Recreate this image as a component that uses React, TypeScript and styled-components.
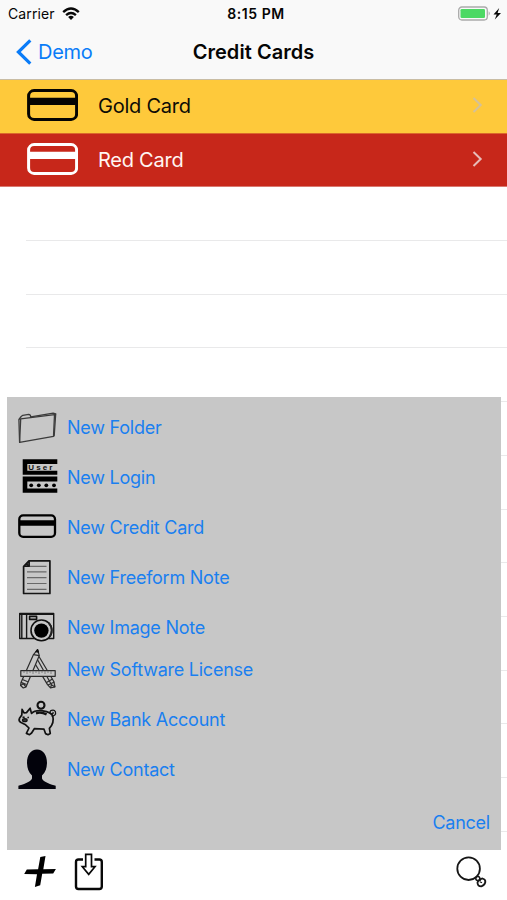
import React from "react";
import styled, { createGlobalStyle } from "styled-components";

const GlobalStyle = createGlobalStyle`
  * { box-sizing: border-box; }
  body { margin: 0; background: #fff; }
  button { border: 0; padding: 0; background: none; font: inherit; color: inherit; }
`;

const Screen = styled.div`
  position: relative;
  width: 507px;
  height: 900px;
  overflow: hidden;
  display: flex;
  flex-direction: column;
  background: #fff;
  color: #050505;
  font-family: Inter, "Liberation Sans", sans-serif;
  svg { display: block; flex: none; }
`;

const StatusBar = styled.header`
  height: 27px;
  flex: none;
  display: grid;
  grid-template-columns: 1fr auto 1fr;
  align-items: center;
  padding: 0 5px 0 8px;
  background: #f9f9f9;
  font-size: 14px;
`;

const Carrier = styled.div`
  display: flex;
  align-items: center;
  gap: 7px;
  letter-spacing: 0.1px;
`;

const Clock = styled.div`
  font-weight: 600;
  font-size: 14px;
  letter-spacing: 0.55px;
  padding-left: 2px;
`;

const Power = styled.div`
  justify-self: end;
`;

const NavBar = styled.nav`
  height: 53px;
  flex: none;
  display: grid;
  grid-template-columns: 1fr auto 1fr;
  align-items: center;
  padding: 0 16px 2px;
  background: #f9f9f9;
  border-bottom: 1px solid #c9bda4;
`;

const Back = styled.button`
  display: flex;
  align-items: center;
  gap: 6px;
  color: #0a7cf8;
  font-size: 20px;
  letter-spacing: -0.3px;
`;

const Title = styled.h1`
  margin: 0;
  font-size: 20px;
  font-weight: 600;
  letter-spacing: 0.05px;
`;

const List = styled.main`
  flex: 1;
  min-height: 0;
  overflow: hidden;
`;

const CardRow = styled.div<{ $bg: string; $fg: string; $line: string }>`
  height: 53.7px;
  display: flex;
  align-items: center;
  padding: 0 24px 2px 27px;
  background: ${(p) => p.$bg};
  color: ${(p) => p.$fg};
  border-bottom: 1px solid ${(p) => p.$line};
`;

const CardName = styled.span`
  flex: 1;
  margin-left: 20px;
  padding-top: 2px;
  font-size: 20px;
  letter-spacing: -0.25px;
`;

const EmptyRow = styled.div`
  height: 53.7px;
  margin-left: 26px;
  border-bottom: 1px solid #e9e9ea;
`;

const Sheet = styled.section`
  position: absolute;
  left: 7px;
  top: 397px;
  width: 494px;
  height: 453px;
  padding: 10px 11px 0 10px;
  display: flex;
  flex-direction: column;
  gap: 10px;
  background: #c7c7c7;
  color: #1a7ff0;
  font-size: 18px;
  letter-spacing: -0.24px;
`;

const Action = styled.button<{ $tight?: boolean }>`
  height: 40px;
  flex: none;
  margin-top: ${(p) => (p.$tight ? "-8px" : "0")};
  display: flex;
  align-items: center;
  gap: 8px;
  text-align: left;
  letter-spacing: inherit;
`;

const Cancel = styled.button`
  align-self: flex-end;
  height: 40px;
  margin-top: 3px;
  letter-spacing: -0.24px;
`;

const Toolbar = styled.footer`
  height: 50px;
  flex: none;
  display: flex;
  align-items: center;
  gap: 18px;
  padding: 0 20px 6px 24px;
  background: #fff;
`;

const Spacer = styled.div`
  flex: 1;
`;

const Wifi = () => (
  <svg width="18" height="14" viewBox="0 0 18 14" fill="none" stroke="#080808" strokeWidth="2.4">
    <path d="M1.2 5.1Q9-2 16.8 5.1M4.1 8.1Q9 3.8 13.9 8.1" />
    <path d="M6.1 9.9Q9 7.8 11.9 9.9L9 13Z" fill="#080808" stroke="none" />
  </svg>
);

const Battery = () => (
  <svg width="44" height="16" viewBox="0 0 44 16">
    <rect x=".7" y="1" width="28.6" height="13" rx="3.2" fill="#f9f9f9" stroke="#aaa" strokeWidth="1.3" />
    <rect x="2.5" y="3" width="24.5" height="9" rx="1.3" fill="#4cd964" />
    <path d="M30.7 5.3q2.2 2.2 0 4.4z" fill="#aaa" />
    <path d="M41.2 2 35.5 8.4h3.2L36.8 13.5 43 7h-3.4z" fill="#080808" />
  </svg>
);

const BackArrow = () => (
  <svg width="16" height="26" viewBox="0 0 16 26" fill="none" stroke="#0a7cf8" strokeWidth="3.2">
    <path d="M14.3 1.4 2.4 13l11.9 11.6" />
  </svg>
);

const Chevron = ({ color }: { color: string }) => (
  <svg width="11" height="18" viewBox="0 0 11 18" fill="none" stroke={color} strokeWidth="2">
    <path d="m1.5 2 7.2 7-7.2 7" />
  </svg>
);

const BigCard = ({ color }: { color: string }) => (
  <svg width="51" height="32" viewBox="0 0 51 32">
    <rect x="1.6" y="1.6" width="48" height="28.8" rx="5.5" fill="none" stroke={color} strokeWidth="3" />
    <path d="M1 8.7h49v7.3H1z" fill={color} />
  </svg>
);

const Glyph = ({ children }: { children: React.ReactNode }) => (
  <svg width="42" height="40" viewBox="0 0 42 40" fill="none" stroke="#111" strokeWidth="1.3" strokeLinejoin="round">
    {children}
  </svg>
);

const FolderIcon = () => (
  <Glyph>
    <g stroke="#3b3b3b">
      <path d="M3.7 11.8 37.5 7.7 36.5 29.3 2.6 35.4Z" />
      <path d="M2.6 35.4 1.9 12.4 4.2 9.5 5.8 8.3 11.6 7.4Q13.5 7.4 13.8 9.8L36.2 6.2 38.7 6.8 37.5 7.7M1.9 12.4 3.7 11.8" />
      <path d="M38.7 6.8 37.2 28.8 36.5 29.3" />
    </g>
  </Glyph>
);

const LoginIcon = () => (
  <Glyph>
    <path d="M5.7 2.3H40.3V7H10.3V13.7H40.3V17.7H5.7ZM5.7 19.5H40.3V24.5H10.3V31.5H40.3V35.7H5.7Z" fill="#000" stroke="none" />
    <text x="11.3" y="12.9" fill="#111" stroke="none" fontSize="8" fontFamily="Liberation Sans, sans-serif" fontWeight="700" letterSpacing="2.1">User</text>
    <g fill="#000" stroke="none">
      <circle cx="14.2" cy="28.3" r="1.9" /><circle cx="21.8" cy="28.3" r="1.9" />
      <circle cx="29.3" cy="28.3" r="1.9" /><circle cx="37" cy="28.3" r="1.9" />
    </g>
  </Glyph>
);

const CreditIcon = () => (
  <Glyph>
    <rect x="2.3" y="8.4" width="35.7" height="21.4" rx="3.8" stroke="#000" strokeWidth="2.3" />
    <path d="M2 13.2H38.5V18.8H2Z" fill="#000" stroke="none" />
  </Glyph>
);

const NoteIcon = () => (
  <Glyph>
    <path d="M12 3.8H32.9V36.5H6.6V9.5Z" stroke="#151515" strokeWidth="1.7" />
    <path d="M12.3 4V9.4H6.8ZM12.3 9.4 9.5 6.8" fill="#444" stroke="#151515" />
    <path d="M13 9.4H29.5M10 14.8H29.5M10 20.7H29.5M10 26.5H29.5M10 32.4H29.5" stroke="#696969" strokeWidth="1.2" />
  </Glyph>
);

const CameraIcon = () => (
  <Glyph>
    <path d="M2.7 6.4H36.7V31.5H2.7ZM4.8 6.4V31.5M9.6 6.4V31.5M2.7 7.2H36.7" stroke="#151515" strokeWidth="1.4" />
    <rect x="12.6" y="9.4" width="7" height="3" strokeWidth="1.6" />
    <circle cx="24.4" cy="23.4" r="10.4" fill="#c7c7c7" strokeWidth="1.6" />
    <circle cx="24.4" cy="23.6" r="7.2" fill="#000" stroke="none" />
    <path d="M31.8 15.8Q37 22.5 33 29" stroke="#222" strokeWidth="2" />
  </Glyph>
);

const SoftwareIcon = () => (
  <Glyph>
    <g stroke="#2b2b2b" strokeWidth="1.2">
      <path d="M16.5 5.6 20.6 .7 22.3 6.6 9 38 6.3 39 3.6 36.5 4 33.4Z" />
      <path d="M16.5 5.6 22.3 6.6M4 33.4 9.6 35.5M5.4 30.5 10.8 32.7M3.6 36.5 6.3 34.7 9 38" />
      <path d="M22 7.5 36.8 32.5 38 38 33.5 38.8 30.5 35.6 18.5 15.5" />
      <path d="M20.7 11 34.5 35.8M29.5 33.5 35.5 30M31 36 37.3 33M33.5 38.8 34.5 35.8 38 38" />
      <rect x="3.8" y="21.7" width="34.4" height="5.6" fill="#c7c7c7" />
      <path d="M7 22v2M10 22v3M13 22v2M16 22v3M19 22v2M22 22v3M25 22v2M28 22v3M31 22v2M34 22v3" stroke="#666" strokeWidth=".7" />
    </g>
    <path d="M19 2.6 20.6 .7 21.4 3.2Z" fill="#111" />
  </Glyph>
);

const BankIcon = () => (
  <Glyph>
    <g stroke="#121212" strokeWidth="1.7">
      <path d="M14.5 14.4 13.1 9.2 9.5 13.6 7 13.8 5.1 10.3 4.8 16 2.5 19.3Q1.2 22 4 23.4L8.6 25.8 12 29 9.4 34.4 12.5 35.7 14.6 34 17.3 29.7 27 30.2 28.5 34.6 31 35.7 33.3 34.5 32.4 29.3Q37.6 23.8 35.7 16.7 34 13 25.8 11.8 17.5 11 14.5 14.4Z" />
      <path d="M34.5 17Q39.5 16.8 38.4 12.8C37 9.7 31.4 11.5 33.4 14.6 35.3 16 37.3 13.6 35.5 13.2" strokeWidth="1.3" />
      <circle cx="24" cy="6.2" r="3.5" strokeWidth="2.1" />
      <path d="M19 14.3Q24 12.6 29.6 15.4" strokeWidth="2.4" />
    </g>
    <path d="m5.5 18 2.2.5M10.5 18.8l1.3-.5" strokeWidth="1.5" />
    <ellipse cx="7.8" cy="21.2" rx="2.3" ry="1.5" fill="#333" />
  </Glyph>
);

const ContactIcon = () => (
  <Glyph>
    <path d="M20 .5C13.8.5 10 6 10 14Q10.3 22.7 15 26.4V29.5C14 33 5.2 35.8 1.4 36.8V40H38.7V36.8C34.8 35.8 26 33 25 29.5V26.4Q29.7 22.7 30 14C30 6 26.2.5 20 .5Z" fill="#02020b" stroke="none" />
  </Glyph>
);

const PlusIcon = () => (
  <svg width="32" height="32" viewBox="0 0 32 32">
    <path d="m16.3 1 5.2-1-2.2 13.2 12.6-.2-2.7 4.6-11 .2-2 11.5-5.3 1.8 2.1-12.8L.2 18l2.6-4.5 11.3-.2z" fill="#000" />
  </svg>
);

const ImportIcon = () => (
  <svg width="30" height="38" viewBox="0 0 30 38" fill="none" stroke="#080808" strokeWidth="2">
    <path d="M9 6.5H4.5Q2 6.5 2 9V33.5Q2 36 4.5 36H25.3Q27.8 36 27.8 33.5V9Q27.8 6.5 25.3 6.5H20.5" strokeWidth="2.4" />
    <path d="M11.7 1.3H17.5V13.7H21L14.7 21.4 8.3 13.7H11.7Z" strokeWidth="1.7" />
  </svg>
);

const SearchIcon = () => (
  <svg width="31" height="32" viewBox="0 0 31 32" fill="none" stroke="#161616">
    <circle cx="12.6" cy="12.7" r="11.3" strokeWidth="1.8" />
    <circle cx="21.8" cy="22.4" r="2" strokeWidth="1.5" />
    <path d="M21.5 26.3Q22.2 24.5 24 24.2 24.3 22.6 26.5 22.5 29.8 23.3 29.3 26.3 28.5 29.5 25.3 30.4 21.3 30.2 21.5 26.3Z" strokeWidth="1.8" />
    <path d="m23.8 25.8 2.2.9" strokeWidth="1.2" />
  </svg>
);

const actions = [
  { label: "New Folder", Icon: FolderIcon },
  { label: "New Login", Icon: LoginIcon },
  { label: "New Credit Card", Icon: CreditIcon },
  { label: "New Freeform Note", Icon: NoteIcon },
  { label: "New Image Note", Icon: CameraIcon },
  { label: "New Software License", Icon: SoftwareIcon, tight: true },
  { label: "New Bank Account", Icon: BankIcon },
  { label: "New Contact", Icon: ContactIcon },
];

export default function App() {
  return (
    <>
      <GlobalStyle />
      <Screen>
        <StatusBar>
          <Carrier>Carrier <Wifi /></Carrier>
          <Clock>8:15 PM</Clock>
          <Power><Battery /></Power>
        </StatusBar>
        <NavBar>
          <Back><BackArrow />Demo</Back>
          <Title>Credit Cards</Title>
        </NavBar>
        <List>
          <CardRow $bg="#fec93b" $fg="#0c0b06" $line="#da672c">
            <BigCard color="#050402" />
            <CardName>Gold Card</CardName>
            <Chevron color="#d4c199" />
          </CardRow>
          <CardRow $bg="#c7271a" $fg="#fff5f2" $line="#d97970">
            <BigCard color="#fff" />
            <CardName>Red Card</CardName>
            <Chevron color="#e7bcb8" />
          </CardRow>
          {Array.from({ length: 12 }, (_, i) => <EmptyRow key={i} />)}
        </List>
        <Toolbar>
          <PlusIcon />
          <ImportIcon />
          <Spacer />
          <SearchIcon />
        </Toolbar>
        <Sheet>
          {actions.map(({ label, Icon, tight }) => (
            <Action key={label} $tight={tight}>
              <Icon />
              {label}
            </Action>
          ))}
          <Cancel>Cancel</Cancel>
        </Sheet>
      </Screen>
    </>
  );
}
